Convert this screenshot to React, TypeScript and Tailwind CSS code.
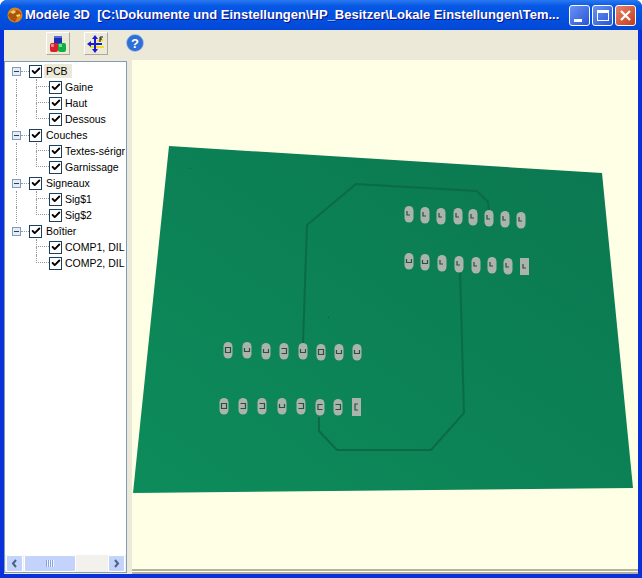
import React from "react";
import { Check } from "lucide-react";

// glyphs drawn on each pad, relative to the pad centre
const L = "M-2 -3v4h3";
const U = "M-2.5 -2v3.5h5v-3.5";
const O = "M-2.5 -2.5h5v5h-5z";
const C = "M2.5 -2.5h-4.5v5h4.5";
const D = "M-2.5 -2.5h5v5h-5";

const pads: [number, number, string][] = [
  [409, 214, L], [425, 215, L], [441, 216, L], [458, 216, L], [473, 217, L], [489, 218, L], [505, 219, L], [521, 220, L],
  [409, 261, U], [425, 262, U], [442, 263, L], [459, 264, L], [476, 265, L], [492, 265, L], [508, 266, L],
  [228, 350, O], [247, 350, U], [266, 351, U], [284, 351, D], [303, 351, U], [321, 352, O], [339, 352, U], [357, 352, U],
  [224, 406, O], [243, 406, D], [262, 406, D], [282, 406, U], [301, 406, D], [320, 407, C], [338, 407, D],
];

const tree = [
  { label: "PCB", selected: true, children: ["Gaine", "Haut", "Dessous"] },
  { label: "Couches", children: ["Textes-sérigr", "Garnissage"] },
  { label: "Signeaux", children: ["Sig$1", "Sig$2"] },
  { label: "Boîtier", children: ["COMP1, DIL", "COMP2, DIL"] },
];

const CheckBox = () => (
  <span className="flex h-[13px] w-[13px] shrink-0 items-center justify-center border border-[#1c3f60] bg-white">
    <Check size={10} strokeWidth={4.5} className="text-black" />
  </span>
);

const Board = () => (
  <svg viewBox="132 60 506 509" className="absolute inset-0 h-full w-full">
    <defs>
      <linearGradient id="pcb" x1="0" y1="1" x2="1" y2="0">
        <stop offset="0" stopColor="#0d8c5b" />
        <stop offset="1" stopColor="#0b7750" />
      </linearGradient>
    </defs>
    <polygon points="169,146 602,173 633,488 133,493" fill="url(#pcb)" />
    <g fill="none" stroke="#0b6b47" strokeWidth="2">
      <polyline points="489,212 488,202 477,191 356,184 307,225 303,343" />
      <polyline points="460,270 464,413 431,450 337,450 319,431 319,417" />
    </g>
    {pads.map(([x, y, glyph]) => (
      <g key={`${x}-${y}`}>
        <rect x={x - 4.5} y={y - 8} width="9" height="16.5" rx="4.5" fill="#aab4ac" />
        <path d={glyph} transform={`translate(${x} ${y})`} fill="none" stroke="#2b4f3f" strokeWidth="1.2" />
      </g>
    ))}
    <rect x="520" y="258" width="9" height="17" fill="#aab4ac" />
    <rect x="352" y="398" width="9" height="18" fill="#aab4ac" />
    <path d="M523 264v4h3M358 404h-3v6h3" fill="none" stroke="#2b4f3f" strokeWidth="1.2" />
    <rect x="190" y="168" width="1" height="1" fill="#063" />
    <rect x="328" y="317" width="1" height="1" fill="#063" />
  </svg>
);

export default function App() {
  return (
    <div className="flex h-[578px] w-[642px] flex-col overflow-hidden rounded-t-[7px] bg-[#0831d9] font-['Liberation_Sans',sans-serif]">
      {/* title bar */}
      <div className="flex h-[30px] shrink-0 items-center bg-gradient-to-b from-[#2a78f0] via-[#0558e4] via-20% to-[#0348d8] pl-[7px] pr-[6px]">
        <svg viewBox="0 0 16 16" className="h-4 w-4 shrink-0">
          <circle cx="8" cy="8" r="7.5" fill="#d9821c" />
          <path d="M1 8l4-4 6-1 4 4-4 2-3 6-4-2z" fill="#a8540e" />
          <path d="M3 5l4-2 2 2-3 2zM9 8l4-1v2l-3 1z" fill="#f7d060" />
        </svg>
        <span className="ml-[2px] w-[537px] truncate whitespace-pre text-[13px] font-bold text-white [text-shadow:1px_1px_#0f1089]">
          Modèle 3D  [C:\Dokumente und Einstellungen\HP_Besitzer\Lokale Einstellungen\Tem...
        </span>
        <div className="ml-auto flex gap-[2px]">
          <button className="flex h-[21px] w-[21px] items-end rounded-[3px] border border-white bg-gradient-to-br from-[#6a92f2] to-[#2a54d8] pb-[3px] pl-[4px]">
            <span className="h-[3px] w-[8px] bg-white" />
          </button>
          <button className="flex h-[21px] w-[21px] items-center justify-center rounded-[3px] border border-white bg-gradient-to-br from-[#6a92f2] to-[#2a54d8]">
            <span className="h-[11px] w-[12px] border border-t-[3px] border-white" />
          </button>
          <button className="flex h-[21px] w-[21px] items-center justify-center rounded-[3px] border border-white bg-gradient-to-br from-[#e8846a] to-[#c23a14]">
            <svg viewBox="0 0 13 13" className="h-[13px] w-[13px]">
              <path d="M2 2l9 9M11 2l-9 9" stroke="#fff" strokeWidth="2.2" />
            </svg>
          </button>
        </div>
      </div>

      <div className="mx-[4px] mb-[4px] flex min-h-0 flex-1 flex-col bg-[#ece9d8]">
        {/* toolbar */}
        <div className="flex h-[30px] shrink-0 items-start pl-[42px] pt-[2px]">
          <button className="flex h-[23px] w-[24px] items-center justify-center border border-b-[#aca899] border-l-white border-r-[#aca899] border-t-white">
            <svg viewBox="0 0 18 18" className="h-[18px] w-[18px]">
              <rect x="5" y="1" width="8" height="8" rx="1" fill="#1c2fb0" />
              <rect x="5" y="1" width="8" height="2" fill="#5a6ae0" />
              <rect x="1" y="8" width="8" height="9" rx="2" fill="#d9202a" />
              <rect x="2" y="9" width="3" height="3" fill="#f08088" />
              <rect x="9" y="8" width="8" height="9" rx="2" fill="#10b040" />
              <rect x="10" y="9" width="3" height="3" fill="#70e090" />
            </svg>
          </button>
          <button className="ml-[14px] flex h-[23px] w-[24px] items-center justify-center border border-b-[#aca899] border-l-white border-r-[#aca899] border-t-white">
            <svg viewBox="0 0 18 18" className="h-[18px] w-[18px]">
              <path d="M3 12h14M10 6l6-1" stroke="#f0e020" strokeWidth="2" />
              <path d="M8 2v14M2 9h13" stroke="#1a1ad0" strokeWidth="2" />
              <path d="M8 0l3 4H5zM8 18l-3-4h6zM0 9l4-3v6z" fill="#1a1ad0" />
              <path d="M13 7V2h3M13 4h2" fill="none" stroke="#111" strokeWidth="1" />
            </svg>
          </button>
          <svg viewBox="0 0 18 18" className="ml-[18px] mt-[2px] h-[18px] w-[18px]">
            <circle cx="9" cy="9" r="8.5" fill="#2f6fd6" stroke="#a8c4ee" strokeWidth="0.7" />
            <text x="9" y="13.5" textAnchor="middle" fontSize="13" fontWeight="700" fill="#fff" fontFamily="Liberation Sans">?</text>
          </svg>
        </div>

        <div className="flex min-h-0 flex-1">
          {/* tree panel */}
          <div className="mb-px mt-px flex w-[123px] shrink-0 flex-col border border-[#7f9db9] bg-white">
            <div className="flex-1 overflow-hidden pl-[7px] pt-[1px] text-[10.5px] text-black">
              {tree.map((node, nodeIndex) => (
                <div key={node.label}>
                  <div className="flex h-4 items-center">
                    <span className="flex h-[9px] w-[9px] shrink-0 items-center justify-center border border-[#7f9db9] bg-[#e8ecf0]">
                      <span className="h-px w-[5px] bg-[#1c3f80]" />
                    </span>
                    <span className="w-[8px] shrink-0 border-t border-dotted border-[#9a9a9a]" />
                    <CheckBox />
                    <span
                      className={`ml-[2px] whitespace-nowrap pl-[2px] pr-[4px] leading-[14px] ${node.selected ? "bg-[#ece9d8]" : ""}`}
                    >
                      {node.label}
                    </span>
                  </div>
                  {node.children.map((child, childIndex) => (
                    <div key={child} className="flex h-4 items-center">
                      <span
                        className={`ml-[4px] h-full w-[20px] shrink-0 border-dotted border-[#9a9a9a] ${
                          nodeIndex < tree.length - 1 ? "border-l" : ""
                        }`}
                      />
                      <span className="flex h-full w-[13px] shrink-0 flex-col">
                        <span className="h-2 border-b border-l border-dotted border-[#9a9a9a]" />
                        <span
                          className={`flex-1 border-dotted border-[#9a9a9a] ${
                            childIndex < node.children.length - 1 ? "border-l" : ""
                          }`}
                        />
                      </span>
                      <CheckBox />
                      <span className="ml-[3px] whitespace-nowrap pt-[2px]">{child}</span>
                    </div>
                  ))}
                </div>
              ))}
            </div>
            {/* horizontal scrollbar */}
            <div className="flex h-[17px] shrink-0 bg-[#f3f1ec] px-[1px]">
              <span className="flex h-[17px] w-[17px] items-center justify-center rounded-[2px] border border-white bg-[#c3d3fb] text-[#4d6185]">
                <svg viewBox="0 0 9 9" className="h-[9px] w-[9px]">
                  <path d="M6 1L3 4.5 6 8" fill="none" stroke="currentColor" strokeWidth="2" />
                </svg>
              </span>
              <span className="ml-px flex h-[17px] w-[52px] items-center justify-center rounded-[2px] border border-white bg-[#c3d3fb]">
                <span className="h-[7px] w-[8px] bg-[repeating-linear-gradient(90deg,#8aa4e0_0_1px,#eef3ff_1px_2px)]" />
              </span>
              <span className="flex-1" />
              <span className="flex h-[17px] w-[17px] items-center justify-center rounded-[2px] border border-white bg-[#c3d3fb] text-[#4d6185]">
                <svg viewBox="0 0 9 9" className="h-[9px] w-[9px]">
                  <path d="M3 1l3 3.5L3 8" fill="none" stroke="currentColor" strokeWidth="2" />
                </svg>
              </span>
            </div>
          </div>

          {/* splitter */}
          <div className="w-[5px] shrink-0 bg-[#ece9d8]" />

          {/* 3D view */}
          <div className="relative min-w-0 flex-1 border-b-[5px] border-double border-[#b5b1a2] bg-[#ffffe6]">
            <Board />
          </div>
        </div>
      </div>
    </div>
  );
}
